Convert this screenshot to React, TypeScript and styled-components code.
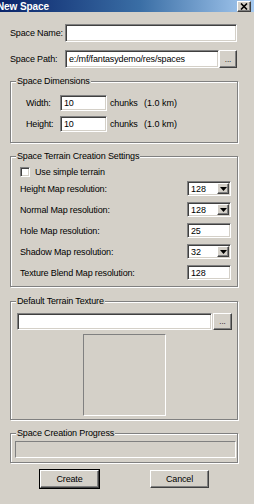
import React from "react";
import styled, { createGlobalStyle, css } from "styled-components";

const GlobalStyle = createGlobalStyle`
    html, body {
        margin: 0;
        padding: 0;
        background: #d4d0c8;
    }
    body {
        font-family: "Liberation Sans", Arial, sans-serif;
        font-size: 9px;
        color: #000;
    }
`;

const sunken = css`
    box-sizing: border-box;
    border: 1px solid;
    border-color: #808080 #ffffff #ffffff #808080;
    box-shadow: inset 1px 1px 0 #404040, inset -1px -1px 0 #d4d0c8;
`;

const raised = css`
    box-sizing: border-box;
    border: 1px solid;
    border-color: #ffffff #404040 #404040 #ffffff;
    box-shadow: inset -1px -1px 0 #808080;
    background: #d4d0c8;
`;

const Window = styled.div`
    width: 254px;
    height: 504px;
    background: #d4d0c8;
    overflow: hidden;
`;

const TitleBar = styled.div`
    height: 12px;
    display: flex;
    align-items: center;
    justify-content: space-between;
    background: linear-gradient(to right, #0a246a 0%, #3a6ea5 55%, #a6caf0 100%);
    padding-right: 3px;
`;

const TitleText = styled.span`
    margin-left: -3px;
    color: #fff;
    font-weight: bold;
    font-size: 10px;
    letter-spacing: -0.1px;
`;

const CloseButton = styled.div`
    ${raised};
    width: 14px;
    height: 11px;
    display: flex;
    align-items: center;
    justify-content: center;
`;

const Body = styled.div`
    padding: 12px 16px 0 10px;
    display: flex;
    flex-direction: column;
`;

const FieldRow = styled.div<{ $top?: number }>`
    display: flex;
    align-items: center;
    height: 18px;
    margin-top: ${(p) => p.$top ?? 0}px;
`;

const Label = styled.span<{ $width?: number }>`
    width: ${(p) => p.$width ?? 55}px;
    flex-shrink: 0;
    white-space: nowrap;
    letter-spacing: -0.15px;
`;

const TextBox = styled.div<{ $width: number; $height?: number }>`
    ${sunken};
    width: ${(p) => p.$width}px;
    height: ${(p) => p.$height ?? 18}px;
    background: #fff;
    display: flex;
    align-items: center;
    padding-left: 3px;
    white-space: nowrap;
    overflow: hidden;
    letter-spacing: -0.15px;
`;

const Browse = styled.div<{ $width?: number; $height?: number }>`
    ${raised};
    width: ${(p) => p.$width ?? 18}px;
    height: ${(p) => p.$height ?? 18}px;
    display: flex;
    align-items: center;
    justify-content: center;
    font-size: 8px;
    padding-top: 1px;
`;

const Group = styled.div<{ $top: number; $pad: string }>`
    position: relative;
    margin-top: ${(p) => p.$top}px;
    border: 1px solid #808080;
    box-shadow: inset 1px 1px 0 #ffffff, 1px 1px 0 #ffffff;
    padding: ${(p) => p.$pad};
    display: flex;
    flex-direction: column;
`;

const Legend = styled.span`
    position: absolute;
    top: -6px;
    left: 5px;
    padding: 0 1px;
    line-height: 11px;
    background: #d4d0c8;
    white-space: nowrap;
    letter-spacing: -0.15px;
`;

const DimRow = styled.div<{ $top?: number }>`
    display: flex;
    align-items: center;
    height: 16px;
    margin-top: ${(p) => p.$top ?? 0}px;
`;

const Unit = styled.span`
    margin-left: 3px;
    width: 34px;
    flex-shrink: 0;
    letter-spacing: -0.15px;
`;

const CheckRow = styled.label`
    display: flex;
    align-items: center;
    height: 10px;
    gap: 5px;
    letter-spacing: -0.15px;
`;

const CheckBox = styled.span`
    ${sunken};
    width: 10px;
    height: 10px;
    background: #fff;
`;

const SettingRow = styled.div<{ $top: number }>`
    display: flex;
    align-items: center;
    justify-content: space-between;
    height: 15px;
    margin-top: ${(p) => p.$top}px;
`;

const Combo = styled.div`
    ${sunken};
    width: 44px;
    height: 15px;
    background: #fff;
    display: flex;
    align-items: center;
    padding: 2px 1px 2px 3px;
    justify-content: space-between;
`;

const ComboArrow = styled.span`
    ${raised};
    width: 12px;
    height: 11px;
    display: flex;
    align-items: center;
    justify-content: center;
`;

const Preview = styled.div`
    ${sunken};
    box-shadow: none;
    width: 83px;
    height: 82px;
    margin: 5px auto 0;
    background: #d4d0c8;
`;

const Progress = styled.div`
    ${sunken};
    box-shadow: none;
    height: 17px;
    background: #d4d0c8;
`;

const ButtonRow = styled.div`
    display: flex;
    gap: 51px;
    padding-left: 30px;
    margin-top: 7px;
`;

const PushButton = styled.div<{ $default?: boolean }>`
    ${raised};
    width: 59px;
    height: 18px;
    display: flex;
    align-items: center;
    justify-content: center;
    letter-spacing: -0.15px;
    ${(p) =>
        p.$default &&
        css`
            outline: 1px solid #000;
            box-shadow: inset -1px -1px 0 #808080, 1px 1px 0 #000;
        `}
`;

const settings = [
    { label: "Height Map resolution:", value: "128", combo: true },
    { label: "Normal Map resolution:", value: "128", combo: true },
    { label: "Hole Map resolution:", value: "25", combo: false },
    { label: "Shadow Map resolution:", value: "32", combo: true },
    { label: "Texture Blend Map resolution:", value: "128", combo: false },
];

function Arrow() {
    return (
        <svg width="7" height="4" viewBox="0 0 7 4">
            <path d="M0 0h7L3.5 4z" fill="#000" />
        </svg>
    );
}

export default function App() {
    return (
        <Window>
            <GlobalStyle />
            <TitleBar>
                <TitleText>New Space</TitleText>
                <CloseButton>
                    <svg width="8" height="7" viewBox="0 0 8 7">
                        <path d="M1 0.5l6 6M7 0.5l-6 6" stroke="#000" strokeWidth="1.6" />
                    </svg>
                </CloseButton>
            </TitleBar>
            <Body>
                <FieldRow>
                    <Label>Space Name:</Label>
                    <TextBox $width={172} />
                </FieldRow>
                <FieldRow $top={8}>
                    <Label>Space Path:</Label>
                    <TextBox $width={154}>e:/mf/fantasydemo/res/spaces</TextBox>
                    <Browse>...</Browse>
                </FieldRow>

                <Group $top={13} $pad="13px 0 10px 15px">
                    <Legend>Space Dimensions</Legend>
                    {["Width:", "Height:"].map((l, i) => (
                        <DimRow key={l} $top={i ? 5 : 0}>
                            <Label $width={34}>{l}</Label>
                            <TextBox $width={47} $height={16}>10</TextBox>
                            <Unit>chunks</Unit>
                            <span>(1.0 km)</span>
                        </DimRow>
                    ))}
                </Group>

                <Group $top={13} $pad="10px 6px 6px 9px">
                    <Legend>Space Terrain Creation Settings</Legend>
                    <CheckRow>
                        <CheckBox />
                        Use simple terrain
                    </CheckRow>
                    {settings.map((s, i) => (
                        <SettingRow key={s.label} $top={i ? 6 : 4}>
                            <Label $width={150}>{s.label}</Label>
                            {s.combo ? (
                                <Combo>
                                    <span>{s.value}</span>
                                    <ComboArrow>
                                        <Arrow />
                                    </ComboArrow>
                                </Combo>
                            ) : (
                                <TextBox $width={44} $height={15}>{s.value}</TextBox>
                            )}
                        </SettingRow>
                    ))}
                </Group>

                <Group $top={14} $pad="11px 5px 3px 6px">
                    <Legend>Default Terrain Texture</Legend>
                    <DimRow>
                        <TextBox $width={195} $height={17} />
                        <Browse $width={19} $height={17} style={{ marginLeft: 1 }}>...</Browse>
                    </DimRow>
                    <Preview />
                </Group>

                <Group $top={13} $pad="7px 1px 4px 4px">
                    <Legend>Space Creation Progress</Legend>
                    <Progress />
                </Group>

                <ButtonRow>
                    <PushButton $default>Create</PushButton>
                    <PushButton>Cancel</PushButton>
                </ButtonRow>
            </Body>
        </Window>
    );
}
